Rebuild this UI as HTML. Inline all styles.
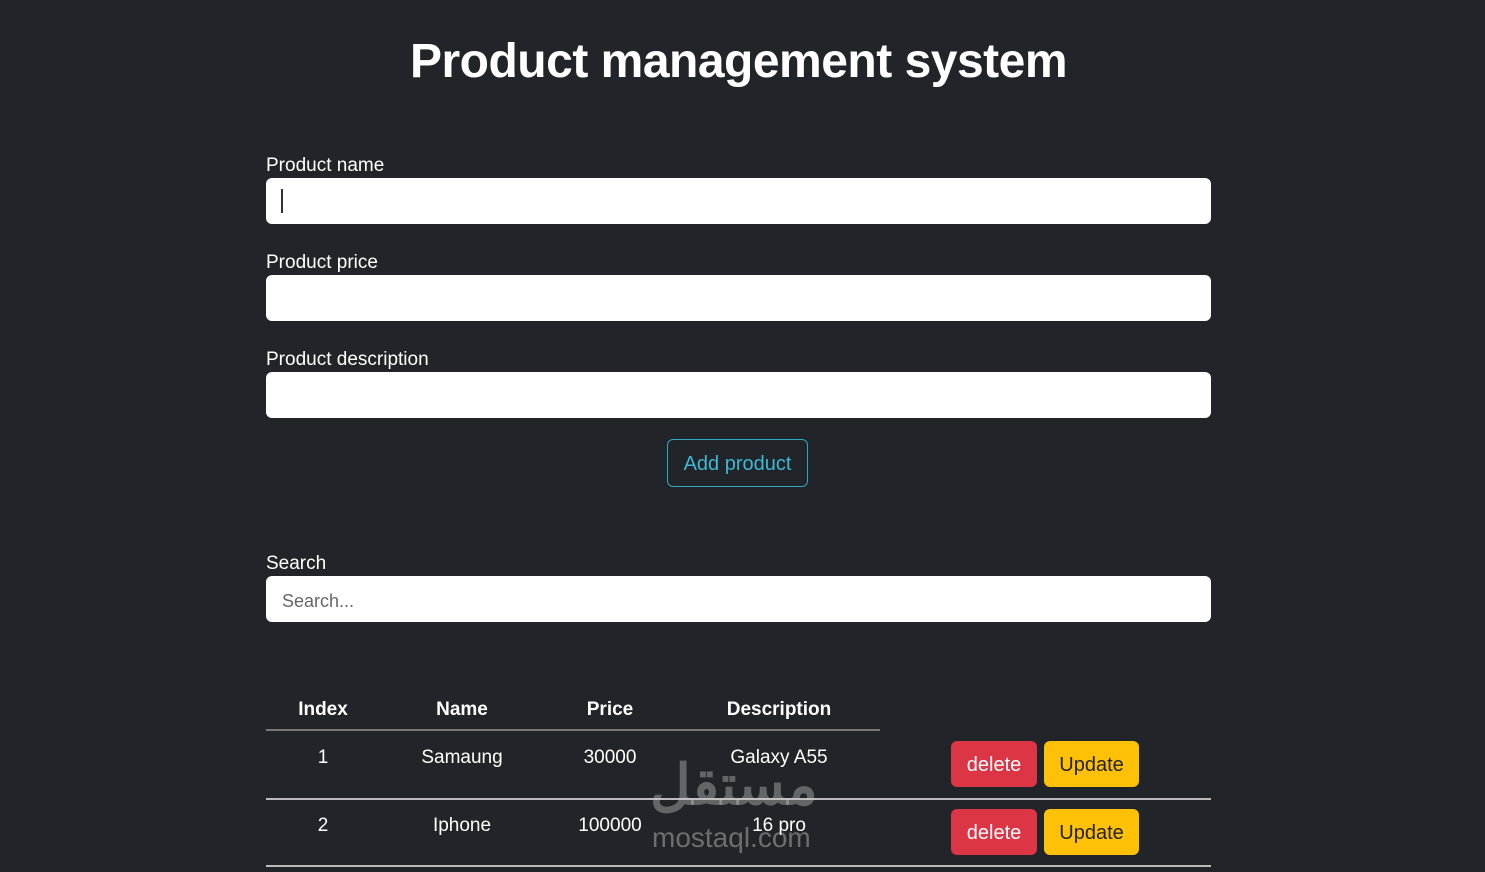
<!DOCTYPE html>
<html><head><style>
body{margin:0;background:#212529;width:1485px;height:872px;overflow:hidden;font-family:"Liberation Sans",sans-serif;color:#fff;position:relative}
.a{position:absolute}
h1{position:absolute;top:34px;left:0;width:1477px;text-align:center;margin:0;font-size:48px;font-weight:bold;letter-spacing:-0.5px}
.lbl{position:absolute;left:266px;font-size:19px}
.in{position:absolute;left:266px;width:945px;height:46px;background:#fff;border-radius:6px}
.btn{position:absolute;height:46px;border-radius:6px;font-size:20px;display:flex;align-items:center;justify-content:center}
.td{position:absolute;font-size:19px;text-align:center;width:140px}
.hr{position:absolute;left:266px;height:2px;background:#777}
</style></head><body>
<h1>Product management system</h1>
<div class="lbl" style="top:155px">Product name</div>
<div class="in" style="top:178px"><div class="a" style="left:15px;top:11px;width:2px;height:24px;background:#333"></div></div>
<div class="lbl" style="top:252px">Product price</div>
<div class="in" style="top:275px"></div>
<div class="lbl" style="top:349px">Product description</div>
<div class="in" style="top:372px"></div>
<div class="btn" style="left:667px;top:439px;width:141px;border:1px solid #2fa8c2;color:#3fb8d4;padding-top:3px;box-sizing:border-box;height:48px">Add product</div>
<div class="lbl" style="top:553px">Search</div>
<div class="in" style="top:576px"><div class="a" style="left:16px;top:15px;font-size:18px;color:#666">Search...</div></div>
<div class="td" style="left:253px;top:699px;font-weight:bold">Index</div>
<div class="td" style="left:392px;top:699px;font-weight:bold">Name</div>
<div class="td" style="left:540px;top:699px;font-weight:bold">Price</div>
<div class="td" style="left:699px;top:699px;font-weight:bold;width:160px">Description</div>
<div class="hr" style="top:729px;width:614px"></div>
<div class="td" style="left:253px;top:747px">1</div>
<div class="td" style="left:392px;top:747px">Samaung</div>
<div class="td" style="left:540px;top:747px">30000</div>
<div class="td" style="left:699px;top:747px;width:160px">Galaxy A55</div>
<div class="btn" style="left:951px;top:741px;width:86px;background:#dc3545;padding-top:3px;box-sizing:border-box">delete</div>
<div class="btn" style="left:1044px;top:741px;width:95px;background:#ffc107;color:#222;padding-top:3px;box-sizing:border-box">Update</div>
<div class="hr" style="top:798px;width:945px;background:#bbb"></div>
<div class="td" style="left:253px;top:815px">2</div>
<div class="td" style="left:392px;top:815px">Iphone</div>
<div class="td" style="left:540px;top:815px">100000</div>
<div class="td" style="left:699px;top:815px;width:160px">16 pro</div>
<div class="btn" style="left:951px;top:809px;width:86px;background:#dc3545;padding-top:3px;box-sizing:border-box">delete</div>
<div class="btn" style="left:1044px;top:809px;width:95px;background:#ffc107;color:#222;padding-top:3px;box-sizing:border-box">Update</div>
<div class="hr" style="top:865px;width:945px;background:#bbb"></div>
<div class="a" style="left:650px;top:752px;font-size:56px;font-weight:bold;color:rgba(200,200,200,0.4);font-family:'Liberation Sans','Noto Sans CJK SC',sans-serif">مستقل</div>
<div class="a" style="left:652px;top:822px;font-size:28px;color:rgba(200,200,200,0.45)">mostaql.com</div>
</body></html>
